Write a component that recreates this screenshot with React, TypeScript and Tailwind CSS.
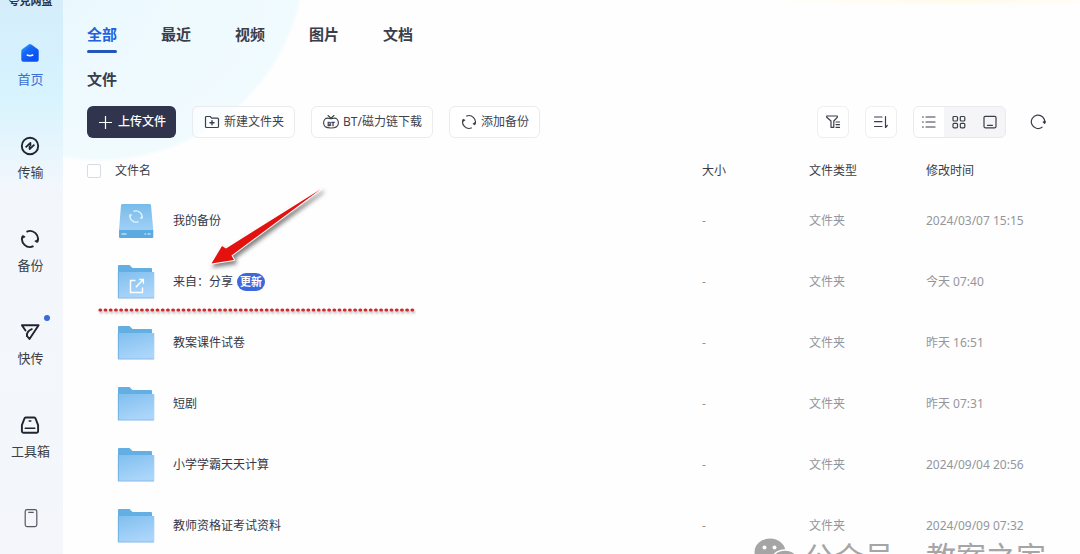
import type { ReactNode } from 'react';

const navItems = [
  { label: '首页', icon: <HomeIcon />, active: true },
  { label: '传输', icon: <TransferIcon /> },
  { label: '备份', icon: <SyncIcon className="w-5 h-5" width={1.9} /> },
  { label: '快传', icon: <SendIcon />, dot: true },
  { label: '工具箱', icon: <ToolboxIcon /> },
];

const tabs = ['全部', '最近', '视频', '图片', '文档'];

const files = [
  { name: '我的备份', kind: 'drive', date: '2024/03/07 15:15' },
  { name: '来自：分享', kind: 'share', date: '今天 07:40', updated: true },
  { name: '教案课件试卷', kind: 'folder', date: '昨天 16:51' },
  { name: '短剧', kind: 'folder', date: '昨天 07:31' },
  { name: '小学学霸天天计算', kind: 'folder', date: '2024/09/04 20:56' },
  { name: '教师资格证考试资料', kind: 'folder', date: '2024/09/09 07:32' },
];

function HomeIcon() {
  return (
    <svg viewBox="0 0 20 20" className="w-5 h-5">
      <defs>
        <linearGradient id="home" x1="0" y1="0" x2="0.7" y2="0.8">
          <stop offset="0" stopColor="#35c3ff" />
          <stop offset="0.45" stopColor="#1668f8" />
          <stop offset="1" stopColor="#0b50f2" />
        </linearGradient>
      </defs>
      <path d="M8.7 1.6a2.2 2.2 0 0 1 2.6 0l6.6 4.7a2 2 0 0 1 .8 1.6v8.9a2 2 0 0 1-2 2H3.3a2 2 0 0 1-2-2V7.9a2 2 0 0 1 .8-1.6z" fill="url(#home)" />
      <path d="M7.3 12q2.7 1.4 5.4 0" stroke="#fff" strokeWidth="1.6" strokeLinecap="round" fill="none" />
    </svg>
  );
}

function TransferIcon() {
  return (
    <svg viewBox="0 0 20 20" className="w-5 h-5" fill="none" stroke="#22252e">
      <circle cx="10" cy="10" r="8.2" strokeWidth="1.9" />
      <path d="M5.6 11.4 10.400 6.900v3.200M14.400 8.600 9.600 13.100v-3.200" strokeWidth="1.800" strokeLinejoin="round" />
    </svg>
  );
}

function SyncIcon({ className, width, color = '#22252e' }: { className: string; width: number; color?: string }) {
  return (
    <svg viewBox="0 0 20 20" className={className} fill="none" stroke={color} strokeWidth={width} strokeLinejoin="round">
      <path d="M6.500 2.800A8 8 0 0 1 17.400 13" />
      <path d="M13.500 17.200A8 8 0 0 1 2.600 7" />
      <path d="M17.300 13.600l-2.500-1.400 2.800-1.600zM2.700 6.400l2.500 1.400-2.800 1.600z" fill={color} strokeWidth="0.800" />
    </svg>
  );
}

function SendIcon() {
  return (
    <svg viewBox="0 0 20 20" className="w-5 h-5" fill="none" stroke="#22252e" strokeWidth="1.900" strokeLinecap="round" strokeLinejoin="round">
      <path d="M5.500 8.500 1.900 3.300H18.600L9.500 17 7 14" />
      <path d="M11.800 7.200C8.300 8.600 6.600 11 7 14" />
    </svg>
  );
}

function ToolboxIcon() {
  return (
    <svg viewBox="0 0 20 20" className="w-5 h-5" fill="none" stroke="#22252e" strokeWidth="1.900" strokeLinejoin="round" strokeLinecap="round">
      <path d="M5.700 2.500h8.600a1.300 1.300 0 0 1 1.200.9l2.600 6.800v6.100a1.500 1.500 0 0 1-1.500 1.500H3.400a1.500 1.500 0 0 1-1.500-1.500v-6.100l2.600-6.800a1.300 1.300 0 0 1 1.200-.9z" />
      <path d="M5.200 13.300h9.600" strokeWidth="1.500" />
      <path d="M9.200 6h1.600" strokeWidth="1.500" />
    </svg>
  );
}

function PhoneIcon() {
  return (
    <svg viewBox="0 0 20 20" className="w-5 h-5" fill="none" stroke="#555862" strokeWidth="1.200" strokeLinecap="round">
      <rect x="4.200" y="1.600" width="11.600" height="17" rx="1.800" />
      <path d="M7.700 4.300h4.600" />
    </svg>
  );
}

function ToolIcon({ children }: { children: ReactNode }) {
  return (
    <svg viewBox="0 0 16 16" className="w-4 h-4 shrink-0" fill="none" stroke="#3b3e49" strokeWidth="1.200" strokeLinecap="round" strokeLinejoin="round">
      {children}
    </svg>
  );
}

function FolderIcon({ share }: { share?: boolean }) {
  return (
    <svg viewBox="0 0 38 34" className="w-[38px] h-[34px]">
      <defs>
        <linearGradient id="folder" x1="0" y1="0" x2="0.4" y2="1">
          <stop offset="0" stopColor="#80bfee" />
          <stop offset="1" stopColor="#abd5fa" />
        </linearGradient>
      </defs>
      <path d="M1 1a1 1 0 0 1 1-1h10.500l3 3H34a1 1 0 0 1 1 1v8H1z" fill="#63aee2" />
      <path d="M1 7h35.500a.8.8 0 0 1 .8.800V32.500a.8.8 0 0 1-.8.800H1z" fill="url(#folder)" />
      <path d="M1.300 7v26" stroke="#5ca5d8" strokeWidth="0.700" />
      <path d="M1 33h36" stroke="#84b6e6" strokeWidth="0.800" />
      {share && (
        <g fill="none" stroke="#fff" strokeWidth="1.400">
          <path d="M18.500 15.500H13.500v12h12v-5" />
          <path d="M18.800 22.300l7.500-7.800M22.200 14.500h4.200v4.200" />
        </g>
      )}
    </svg>
  );
}

function DriveIcon() {
  return (
    <svg viewBox="0 0 38 36" className="w-[38px] h-9">
      <defs>
        <linearGradient id="drive" x1="0" y1="0" x2="0" y2="1">
          <stop offset="0" stopColor="#78bbe9" />
          <stop offset="1" stopColor="#a0d0f6" />
        </linearGradient>
      </defs>
      <path d="M5.500 1h27a1.500 1.500 0 0 1 1.500 1.300l2.300 25H2l2-25A1.500 1.500 0 0 1 5.500 1z" fill="url(#drive)" />
      <path d="M2 27h34.300v7a1 1 0 0 1-1 1H3a1 1 0 0 1-1-1z" fill="#5caae0" />
      <path d="M4.500 31h5M27.500 31h1.500M30.500 31h3" stroke="#b9dffa" strokeWidth="1.300" />
      <g fill="none" stroke="#e4f4ff" strokeWidth="1.300">
        <path d="M16.500 8.400A6 6 0 0 1 24.800 15.300" />
        <path d="M21.500 18.600A6 6 0 0 1 13.200 11.700" />
        <path d="M25 12.800v2.800l-2.200-.9M13 14.200v-2.800l2.200.9" strokeWidth="1" />
      </g>
    </svg>
  );
}

function Annotations() {
  return (
    <>
      <svg viewBox="0 0 120 84" className="absolute left-[143px] top-[184px] w-[120px] h-[84px] pointer-events-none drop-shadow-[2px_3px_2px_rgba(60,60,60,0.65)]">
        <path d="M115 5 25.500 71.500 28 76 5.500 79.500 16 62 20 64.500z" fill="#e3120f" stroke="#fff" strokeWidth="2" strokeLinejoin="round" paintOrder="stroke" />
      </svg>
      <svg viewBox="0 0 318 8" className="absolute left-[35px] top-[306px] w-[318px] h-2 pointer-events-none drop-shadow-[1px_2px_1px_rgba(90,40,40,0.35)]">
        <path d="M2 4h315" stroke="#cb2a2e" strokeWidth="3.200" strokeLinecap="round" strokeDasharray="0.600 4.600" fill="none" />
      </svg>
    </>
  );
}

function Watermark() {
  return (
    <div className="absolute right-[34px] -bottom-[24px] flex items-center text-[30px] leading-[42px] text-[#a5a5a5] pointer-events-none">
      <svg viewBox="0 0 46 38" className="w-[46px] h-[38px] mr-1">
        <ellipse cx="16" cy="14" rx="15.500" ry="13.500" fill="#a5a5a5" />
        <path d="M6 24 5 31l7-4z" fill="#a5a5a5" />
        <circle cx="10.500" cy="9.500" r="2" fill="#fff" />
        <circle cx="20.500" cy="9.500" r="2" fill="#fff" />
        <ellipse cx="31" cy="24" rx="14" ry="12" fill="#a5a5a5" stroke="#fff" strokeWidth="1.500" />
      </svg>
      <span>公众号</span>
      <span className="w-8 text-center">·</span>
      <span>教案之家</span>
    </div>
  );
}

const outlineButton = 'flex items-center gap-1 h-8 pl-[11px] pr-[10px] rounded-md border border-[#e9ebef] bg-white/60 text-xs text-[#3f424d]';
const squareButton = 'flex items-center justify-center w-8 h-8 rounded-md border border-[#eeeff2] bg-white';

export default function App() {
  return (
    <div className="relative flex h-screen overflow-hidden bg-[#fefefe] font-['Noto_Sans','Noto_Sans_CJK_SC',sans-serif] text-[#2f3240]">
      <aside className="w-[63px] shrink-0 pr-[2px] bg-[linear-gradient(180deg,#d5edfb_0px,#d6f3fe_90px,#f3f7fc_190px,#f4f6fb_100%)]">
        <p className="-mt-1 text-center text-[11px] leading-[10px] font-bold whitespace-nowrap">夸克网盘</p>
        <nav className="flex flex-col items-center gap-12 pt-[37px]">
          {navItems.map((item) => (
            <a key={item.label} href="#" className={`relative flex flex-col items-center gap-[7px] text-[13px] leading-[18px] ${item.active ? 'text-[#3a6fd8]' : 'text-[#3c3f48]'}`}>
              {item.icon}
              <span>{item.label}</span>
              {item.dot && <span className="absolute -top-[7px] -right-[6px] w-[6px] h-[6px] rounded-full bg-[#3b68dc]" />}
            </a>
          ))}
          <a href="#" aria-label="手机">
            <PhoneIcon />
          </a>
        </nav>
      </aside>

      <main className="relative flex-1 min-w-0 pl-6 pr-[26px] bg-[radial-gradient(circle_at_-10px_-30px,#e9f8fe_0px,#effafe_150px,transparent_158px),radial-gradient(circle_at_37px_-45px,#ecf9fe_0px,#f1fbfe_203px,transparent_207px),radial-gradient(ellipse_200px_6px_at_88%_0px,#fffae8,transparent)]">
        {/* Tabs */}
        <div className="flex gap-11 pt-[22px]">
          {tabs.map((tab, index) => (
            <button key={tab} className={`flex flex-col gap-1 text-[15px] leading-6 font-bold ${index === 0 ? 'text-[#2260dd]' : 'text-[#3a3d4b]'}`}>
              {tab}
              <span className={`w-full h-[3px] rounded-full ${index === 0 ? 'bg-[#2456b8]' : ''}`} />
            </button>
          ))}
        </div>

        <h1 className="mt-[14px] text-[15px] leading-6 font-bold text-[#3a3d4b]">文件</h1>

        {/* Toolbar */}
        <div className="flex items-center gap-4 mt-[15px]">
          <button className="flex items-center gap-[6px] h-8 pl-3 pr-[10px] rounded-md bg-[#30344d] text-xs font-medium text-white">
            <svg viewBox="0 0 13 13" className="w-[13px] h-[13px]" stroke="#fff" strokeWidth="1.200">
              <path d="M6.500 0v13M0 6.500h13" />
            </svg>
            上传文件
          </button>
          <button className={outlineButton}>
            <ToolIcon>
              <path d="M1.500 3.500a1 1 0 0 1 1-1h3.600l1.600 1.700h5.800a1 1 0 0 1 1 1v7.300a1 1 0 0 1-1 1h-11a1 1 0 0 1-1-1z" />
              <path d="M8 6.700v4M6 8.700h4" strokeWidth="1.400" />
            </ToolIcon>
            新建文件夹
          </button>
          <button className={outlineButton}>
            <svg viewBox="0 0 16 16" className="w-4 h-4 shrink-0" fill="none" stroke="#3b3e49" strokeWidth="1.100" strokeLinecap="round">
              <path d="M5 1.500l3 2.700 3-2.700M6.600 4.500C2 3 .6 6.500.6 9c0 3.300 2 5 7.400 5s7.400-1.700 7.400-5c0-2.500-1.400-6-6-4.500q-1.400.6-2.800 0" />
              <text x="8" y="11.500" textAnchor="middle" fontSize="6" fontWeight="700" fill="#3b3e49" strokeWidth="0.300">BT</text>
            </svg>
            BT/磁力链下载
          </button>
          <button className={outlineButton}>
            <SyncIcon className="w-4 h-4 shrink-0" width={1.5} color="#3b3e49" />
            添加备份
          </button>

          <div className="flex items-center gap-4 ml-auto">
            <button className={squareButton} aria-label="筛选">
              <ToolIcon>
                <path d="M1.700 2h10.600v1.300L8.800 7v6.300H6V7L1.700 3.300z" />
                <path d="M11 8h3.500M11 10.700h3.500M11 13.400h3.500" />
              </ToolIcon>
            </button>
            <button className={squareButton} aria-label="排序">
              <ToolIcon>
                <path d="M1.500 3h7.500M1.500 7.700h7.500M1.500 12.500h7.500M12.500 2.500V13.500l1.800-2" />
              </ToolIcon>
            </button>
            <div className="flex w-[93px] h-8 rounded-md border border-[#e9eaee] overflow-hidden bg-[#f5f5f8]">
              <button className="flex flex-1 items-center justify-center bg-white" aria-label="列表">
                <ToolIcon>
                  <path d="M5 3h9M5 8h9M5 13h9M1.500 3h.8M1.500 8h.8M1.500 13h.8" />
                </ToolIcon>
              </button>
              <button className="flex flex-1 items-center justify-center" aria-label="网格">
                <ToolIcon>
                  <rect x="2" y="2.500" width="4.500" height="4.500" rx="1" />
                  <rect x="9.300" y="2.500" width="4.500" height="4.500" rx="1" />
                  <rect x="2" y="9.300" width="4.500" height="4.500" rx="1" />
                  <rect x="9.300" y="9.300" width="4.500" height="4.500" rx="1" />
                </ToolIcon>
              </button>
              <button className="flex flex-1 items-center justify-center" aria-label="大图">
                <ToolIcon>
                  <rect x="2" y="2.300" width="12" height="11.500" rx="1.200" />
                  <path d="M5.500 11.300h5" />
                </ToolIcon>
              </button>
            </div>
            <button className="flex items-center justify-center w-8 h-8" aria-label="刷新">
              <ToolIcon>
                <path d="M12 13.200A6.700 6.700 0 1 1 14.700 8.500" />
                <path d="M13.200 8l1.500 1.400.6-2z" fill="#3b3e49" />
              </ToolIcon>
            </button>
          </div>
        </div>

        {/* File list */}
        <table className="w-full mt-[14px] table-fixed text-left text-xs">
          <thead>
            <tr className="h-[38px] text-[#3a3d46]">
              <th className="font-normal">
                <label className="flex items-center gap-[14px]">
                  <input type="checkbox" className="appearance-none w-[14px] h-[14px] rounded-xs border border-[#d9dce2] bg-white" />
                  文件名
                </label>
              </th>
              <th className="w-[107px] font-normal">大小</th>
              <th className="w-[117px] font-normal">文件类型</th>
              <th className="w-32 font-normal">修改时间</th>
            </tr>
          </thead>
          <tbody>
            {files.map((file) => (
              <tr key={file.name} className="h-[61px] text-[#94969c]">
                <td className="pl-[30px]">
                  <div className="flex items-center">
                    {file.kind === 'drive' ? <DriveIcon /> : <FolderIcon share={file.kind === 'share'} />}
                    <a href="#" className="ml-[18px] text-[#343747]">{file.name}</a>
                    {file.updated && (
                      <span className="ml-1 px-[3px] rounded-full bg-[#3c68dc] text-[11px] leading-[18px] font-bold text-white">更新</span>
                    )}
                  </div>
                </td>
                <td>-</td>
                <td>文件夹</td>
                <td className="whitespace-nowrap">{file.date}</td>
              </tr>
            ))}
          </tbody>
        </table>

        <Annotations />
      </main>

      <Watermark />
    </div>
  );
}
